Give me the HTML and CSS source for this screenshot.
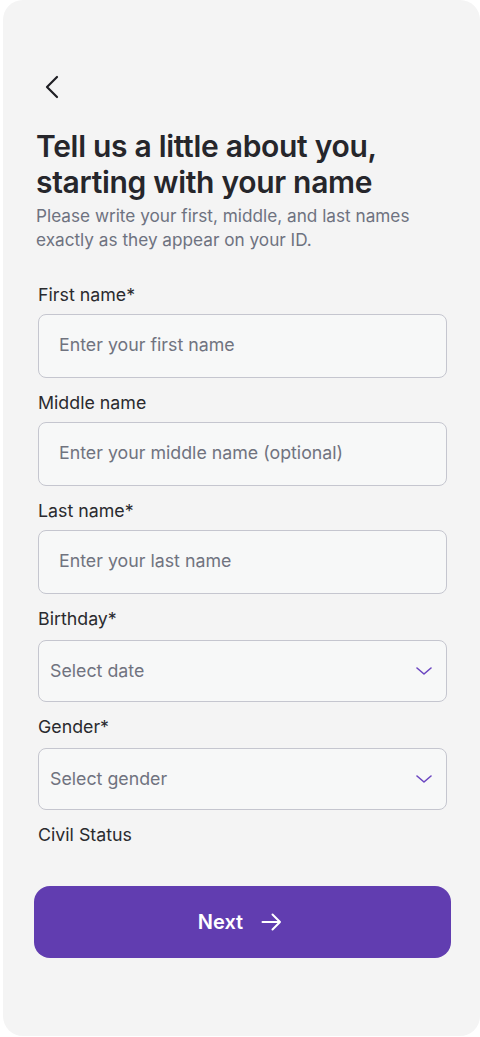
FILE: index.html
```html
<!DOCTYPE html>
<html lang="en">
<head>
<meta charset="utf-8">
<title>Tell us about you</title>
<link rel="stylesheet" href="styles.css">
</head>
<body>
<div class="card">
  <button class="back" aria-label="Back">
    <svg width="24" height="24" viewBox="0 0 24 24"><polyline points="17,2 7,12 17,22" fill="none" stroke="#1f1f24" stroke-width="2.2" stroke-linecap="round" stroke-linejoin="round"/></svg>
  </button>
  <h1 class="title">Tell us a little about you, starting with your name</h1>
  <p class="subtitle">Please write your first, middle, and last names exactly as they appear on your ID.</p>
  <form class="form">
    <div class="field">
      <label class="label">First name*</label>
      <div class="input"><span class="ph">Enter your first name</span></div>
    </div>
    <div class="field">
      <label class="label">Middle name</label>
      <div class="input"><span class="ph">Enter your middle name (optional)</span></div>
    </div>
    <div class="field">
      <label class="label">Last name*</label>
      <div class="input"><span class="ph">Enter your last name</span></div>
    </div>
    <div class="field">
      <label class="label label-select">Birthday*</label>
      <div class="select"><span class="ph">Select date</span>
        <svg class="chev" width="16" height="8" viewBox="0 0 16 8"><polyline points="1,1 8,7 15,1" fill="none" stroke="#6b46c1" stroke-width="1.6" stroke-linecap="round" stroke-linejoin="round"/></svg>
      </div>
    </div>
    <div class="field">
      <label class="label label-select">Gender*</label>
      <div class="select"><span class="ph">Select gender</span>
        <svg class="chev" width="16" height="8" viewBox="0 0 16 8"><polyline points="1,1 8,7 15,1" fill="none" stroke="#6b46c1" stroke-width="1.6" stroke-linecap="round" stroke-linejoin="round"/></svg>
      </div>
    </div>
    <div class="field">
      <label class="label">Civil Status</label>
    </div>
  </form>
  <button class="next">Next
    <svg width="21" height="18" viewBox="0 0 21 18"><path d="M1.5 9 H19 M11.5 1.5 L19 9 L11.5 16.5" fill="none" stroke="#ffffff" stroke-width="2" stroke-linecap="round" stroke-linejoin="round"/></svg>
  </button>
</div>
</body>
</html>
```
FILE: styles.css
```css
* { box-sizing: border-box; }
html, body { margin: 0; padding: 0; background: #ffffff; }
body { font-family: Inter, "Noto Sans", sans-serif; }

.card {
  margin-left: 3px;
  width: 477px;
  height: 1036px;
  background: #f4f4f4;
  border-radius: 20px;
  padding: 75px 29px 0 31px;
}

.back {
  display: block;
  margin: 0 0 0 6px;
  padding: 0;
  border: 0;
  background: none;
  width: 24px;
  height: 24px;
}
.back svg { display: block; }

.title {
  margin: 29px 0 0 2px;
  font-size: 30px;
  line-height: 36px;
  font-weight: 600;
  color: #26262b;
  letter-spacing: -0.3px;
  max-width: 380px;
}

.subtitle {
  margin: 4px 0 0 2px;
  font-size: 17.2px;
  line-height: 24px;
  color: #6e7280;
}

.form {
  margin: 31px 0 0 4px;
  display: flex;
  flex-direction: column;
  gap: 13px;
  width: 409px;
}

.field { display: flex; flex-direction: column; }

.label {
  font-size: 17.8px;
  line-height: 24px;
  color: #2a2a2e;
  margin-bottom: 7px;
}
.field:last-child .label { margin-bottom: 0; }
.label-select { margin-bottom: 9px; }

.input, .select {
  height: 64px;
  border: 1px solid #c5c6cf;
  border-radius: 8px;
  background: #f7f8f8;
  display: flex;
  align-items: center;
  padding-left: 20px;
  padding-bottom: 4px;
}
.select {
  height: 62px;
  padding-left: 11px;
  padding-right: 14px;
  padding-bottom: 1px;
  justify-content: space-between;
}

.ph {
  font-size: 17.8px;
  color: #70737f;
}

.chev { display: block; }

.next {
  margin-top: 39px;
  width: 417px;
  height: 72px;
  border: 0;
  border-radius: 16px;
  background: #613db0;
  color: #ffffff;
  font-family: Inter, "Noto Sans", sans-serif;
  font-size: 20px;
  font-weight: 600;
  display: flex;
  align-items: center;
  justify-content: center;
  gap: 18px;
  padding: 0 5px 0 0;
}
.next svg { display: block; }
```
